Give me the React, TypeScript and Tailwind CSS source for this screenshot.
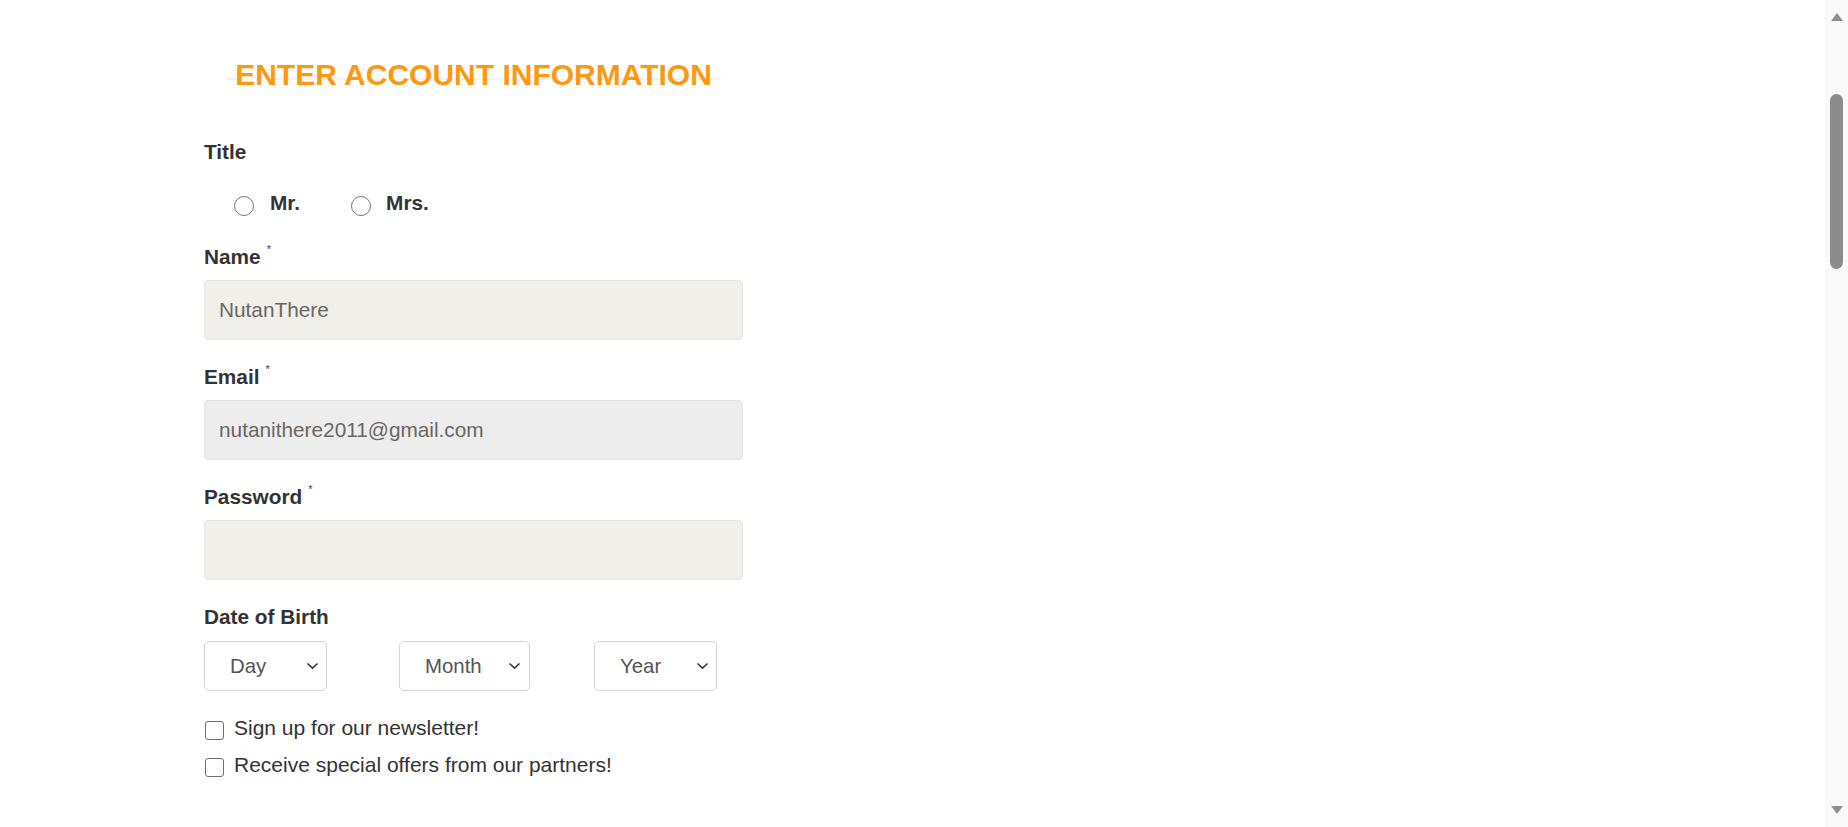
import React from "react";

function Chevron() {
  return (
    <svg width="13" height="8" viewBox="0 0 13 8" className="shrink-0">
      <polyline points="1.5,1.5 6.5,6.2 11.5,1.5" fill="none" stroke="#3a3a3a" strokeWidth="1.6" />
    </svg>
  );
}

function Label({ text, req }: { text: string; req?: boolean }) {
  return (
    <div className="text-[20.8px] leading-[24px] font-bold text-[#333] h-[24px] whitespace-nowrap">
      {text}
      {req && (
        <span className="ml-[6px] text-[11px] font-normal leading-[0] align-[11px] text-[#444]">*</span>
      )}
    </div>
  );
}

function Select({ text, w, pr }: { text: string; w: string; pr: string }) {
  return (
    <div className={`${w} h-[50px] flex items-center justify-between pl-[25px] ${pr} bg-white border border-[#d4d4d4] rounded-[5px] text-[20.4px] text-[#555]`}>
      <span>{text}</span>
      <Chevron />
    </div>
  );
}

export default function App() {
  return (
    <div className="w-full h-[827px] flex overflow-hidden bg-white font-['Liberation_Sans',Arial,sans-serif]">
      <div className="flex-1 pl-[204px] pt-[58px]">
        <div className="relative ml-[22px] w-[495px] h-[34px]">
          <div className="absolute left-0 right-0 top-[20px] h-[2px] bg-[#f4f4f4]" />
          <div className="relative text-center text-[30px] leading-[34px] font-bold text-[#FE980F] whitespace-nowrap">
            ENTER ACCOUNT INFORMATION
          </div>
        </div>

        <div className="mt-[48px]">
          <Label text="Title" />
        </div>

        <div className="mt-[27px] flex items-start h-[24px] pl-[30px] text-[20.8px] leading-[24px] font-bold text-[#333]">
          <div className="mt-[5px] w-[20px] h-[20px] rounded-full border-[1.5px] border-[#767676] bg-white" />
          <span className="ml-[16px]">Mr.</span>
          <div className="ml-[51px] mt-[5px] w-[20px] h-[20px] rounded-full border-[1.5px] border-[#767676] bg-white" />
          <span className="ml-[15px]">Mrs.</span>
        </div>

        <div className="mt-[30px]">
          <Label text="Name" req />
        </div>
        <div className="mt-[11px] w-[539px] h-[60px] flex items-center pl-[14px] bg-[#F0EFE9] border border-[#e4e3dc] rounded-[4px] text-[20.8px] text-[#696763]">
          NutanThere
        </div>

        <div className="mt-[25px]">
          <Label text="Email" req />
        </div>
        <div className="mt-[11px] w-[539px] h-[60px] flex items-center pl-[14px] bg-[#EDEDED] border border-[#e2e2e2] rounded-[4px] text-[20.8px] text-[#696763]">
          nutanithere2011@gmail.com
        </div>

        <div className="mt-[25px]">
          <Label text="Password" req />
        </div>
        <div className="mt-[11px] w-[539px] h-[60px] bg-[#F0EFE9] border border-[#e4e3dc] rounded-[4px]" />

        <div className="mt-[25px]">
          <Label text="Date of Birth" />
        </div>
        <div className="mt-[12px] flex">
          <div className="w-[195px]">
            <Select text="Day" w="w-[123px]" pr="pr-[7px]" />
          </div>
          <div className="w-[195px]">
            <Select text="Month" w="w-[131px]" pr="pr-[8px]" />
          </div>
          <div className="w-[195px]">
            <Select text="Year" w="w-[123px]" pr="pr-[7px]" />
          </div>
        </div>

        <div className="mt-[25px] flex items-start h-[24px] text-[21px] leading-[24px] text-[#333]">
          <div className="ml-[1px] mt-[5px] w-[19px] h-[19px] rounded-[3px] border border-[#6f6f6f] bg-white" />
          <span className="ml-[10px]">Sign up for our newsletter!</span>
        </div>
        <div className="mt-[13px] flex items-start h-[24px] text-[21px] leading-[24px] text-[#333]">
          <div className="ml-[1px] mt-[5px] w-[19px] h-[19px] rounded-[3px] border border-[#6f6f6f] bg-white" />
          <span className="ml-[10px]">Receive special offers from our partners!</span>
        </div>
      </div>

      <div className="w-[23px] h-full bg-[#f9f9f9] flex flex-col items-center">
        <svg width="14" height="10" viewBox="0 0 14 10" className="mt-[12px]">
          <polygon points="7,1 13,9 1,9" fill="#8f8f8f" />
        </svg>
        <div className="mt-[72px] w-[13px] h-[175px] rounded-full bg-[#8b8b8b]" />
        <div className="flex-1" />
        <svg width="14" height="10" viewBox="0 0 14 10" className="mb-[12px]">
          <polygon points="1,1 13,1 7,9" fill="#8f8f8f" />
        </svg>
      </div>
    </div>
  );
}
